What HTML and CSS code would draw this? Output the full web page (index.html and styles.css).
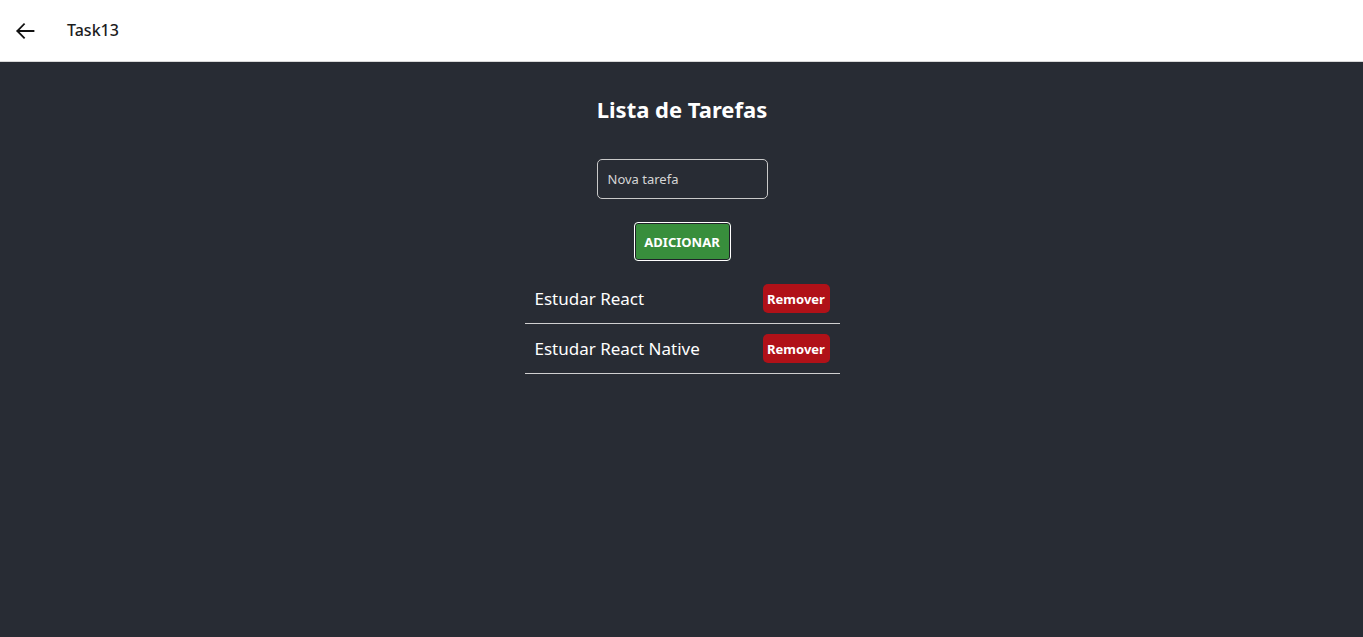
FILE: index.html
```html
<!DOCTYPE html>
<html lang="pt">
<head>
<meta charset="utf-8">
<title>Task13</title>
<link rel="stylesheet" href="styles.css">
</head>
<body>
<header class="appbar">
  <button class="back" aria-label="Voltar">
    <svg width="24" height="24" viewBox="0 0 24 24"><path d="M20.5 12H4.5M11 5.2L4.3 12L11 18.8" fill="none" stroke="#111" stroke-width="1.8" stroke-linecap="square"/></svg>
  </button>
  <span class="appbar-title">Task13</span>
</header>
<main class="screen">
  <h1 class="title">Lista de Tarefas</h1>
  <input class="task-input" type="text" placeholder="Nova tarefa">
  <button class="add-btn">ADICIONAR</button>
  <ul class="task-list">
    <li class="task-item"><span class="task-text">Estudar React</span><button class="remove-btn">Remover</button></li>
    <li class="task-item"><span class="task-text">Estudar React Native</span><button class="remove-btn">Remover</button></li>
  </ul>
</main>
</body>
</html>
```
FILE: styles.css
```css
* { box-sizing: border-box; }
html, body { margin: 0; height: 100%; }
body {
  font-family: "Noto Sans", "Open Sans", sans-serif;
  background: #282c34;
  display: flex;
  flex-direction: column;
}
.appbar {
  height: 62px;
  background: #fff;
  border-bottom: 1px solid #d8d8d8;
  display: flex;
  align-items: center;
  padding-left: 13px;
  flex-shrink: 0;
}
.back {
  width: 24px; height: 24px; padding: 0; border: 0; background: none;
  display: flex; align-items: center; justify-content: center;
  margin-right: 30px;
}
.appbar-title {
  font-size: 16px;
  font-weight: 500;
  color: #1c1c1e;
  margin-top: -1px;
}
.screen {
  flex: 1;
  display: flex;
  flex-direction: column;
  align-items: center;
  padding-top: 30px;
  padding-left: 1px;
}
.title {
  margin: 0;
  color: #fff;
  font-size: 22px;
  font-weight: 700;
  line-height: 34px;
}
.task-input {
  margin-top: 33px;
  width: 171px;
  height: 40px;
  border: 1px solid #c9c9c9;
  border-radius: 5px;
  background: transparent;
  padding: 0 10px;
  font: 13px "Noto Sans", sans-serif;
  color: #fff;
  outline: none;
}
.task-input::placeholder { color: #d6d6d6; }
.add-btn {
  margin-top: 23px;
  width: 97px;
  height: 39px;
  border: 1px solid #fff;
  border-radius: 4px;
  background: #388e3c;
  box-shadow: inset 0 0 0 1px #1e2228;
  color: #fff;
  font: 700 13px "Noto Sans", sans-serif;
  padding: 0;
}
.task-list {
  list-style: none;
  margin: 13px 0 0;
  padding: 0;
  width: 315px;
}
.task-item {
  height: 50px;
  border-bottom: 1px solid #d0d0d0;
  display: flex;
  align-items: center;
  justify-content: space-between;
  padding: 0 10px;
}
.task-text {
  color: #fff;
  font-size: 17px;
}
.remove-btn {
  width: 67px;
  height: 29px;
  border: 0;
  border-radius: 5px;
  background: #b01118;
  color: #fff;
  font: 700 13px "Noto Sans", sans-serif;
  padding: 0;
}
```
